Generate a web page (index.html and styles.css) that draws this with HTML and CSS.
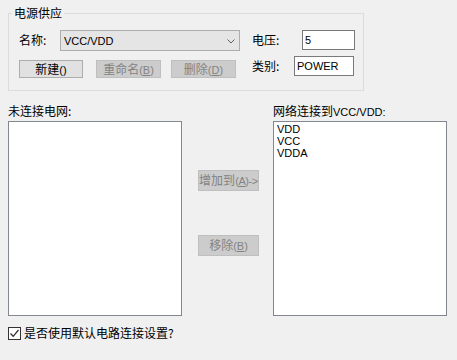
FILE: index.html
```html
<!DOCTYPE html>
<html lang="zh-CN">
<head>
    <meta charset="UTF-8">
    <title>电源供应</title>
    <link rel="stylesheet" href="styles.css">
</head>
<body>
    <div class="group">
        <span class="group-title">电源供应</span>
        <div class="row row-top">
            <span class="lbl lbl-name">名称:</span>
            <div class="combo">
                <span class="latin">VCC/VDD</span>
                <svg class="chev" width="8" height="5" viewBox="0 0 8 5"><path d="M0.5 0.5 L4 4 L7.5 0.5" fill="none" stroke="#606060" stroke-width="1"/></svg>
            </div>
            <span class="lbl lbl-volt">电压:</span>
            <input class="field field-volt latin" type="text" value="5">
        </div>
        <div class="row row-bottom">
            <button class="btn btn-new">新建<span class="latin">()</span></button>
            <button class="btn btn-rename" disabled>重命名<span class="latin">(<u>B</u>)</span></button>
            <button class="btn btn-delete" disabled>删除<span class="latin">(<u>D</u>)</span></button>
            <span class="lbl lbl-type">类别:</span>
            <input class="field field-type latin" type="text" value="POWER">
        </div>
    </div>

    <div class="lists">
        <div class="list-col">
            <div class="list-label">未连接电网:</div>
            <div class="listbox"></div>
        </div>
        <div class="mid-col">
            <button class="btn btn-add" disabled>增加到<span class="latin tight">(<u>A</u>)-&gt;</span></button>
            <button class="btn btn-remove" disabled>移除<span class="latin">(<u>B</u>)</span></button>
        </div>
        <div class="list-col">
            <div class="list-label">网络连接到<span class="latin">VCC/VDD:</span></div>
            <div class="listbox">
                <div class="item latin">VDD</div>
                <div class="item latin">VCC</div>
                <div class="item latin">VDDA</div>
            </div>
        </div>
    </div>

    <label class="check-row">
        <span class="checkbox">
            <svg width="11" height="11" viewBox="0 0 11 11"><path d="M1.5 5.5 L4.2 8.3 L9.5 2" fill="none" stroke="#333" stroke-width="1.3"/></svg>
        </span>
        是否使用默认电路连接设置?
    </label>
</body>
</html>
```

FILE: styles.css
```css
body {
    margin: 0;
    width: 457px;
    height: 360px;
    background: #f0f0f0;
    font-family: "Noto Sans CJK SC", "Liberation Sans", sans-serif;
    font-size: 12px;
    line-height: 14px;
    color: #000;
    overflow: hidden;
}

.latin { font-family: "Liberation Sans", Arial, sans-serif; font-size: 11px; }
.tight { letter-spacing: -0.4px; }

/* group box */
.group {
    margin: 13px 0 0 8px;
    width: 344px;
    height: 76px;
    border: 1px solid #dcdcdc;
    padding: 0 0 0 10px;
    box-sizing: content-box;
}
.group-title {
    display: inline-block;
    margin: -8px 0 0 -7px;
    padding: 0 2px;
    background: #f0f0f0;
    vertical-align: top;
    height: 14px;
}
.row { display: flex; align-items: flex-start; }
.row-top { margin-top: 2px; }
.row-bottom { margin-top: 5px; }

.lbl { display: inline-block; line-height: 20px; }
.lbl-name { width: 41px; }
.lbl-volt { width: 50px; margin-left: 12px; }
.lbl-type { width: 42px; margin-left: 16px; }

.combo {
    width: 180px;
    height: 21px;
    box-sizing: border-box;
    border: 1px solid #adadad;
    background: #e5e5e5;
    display: flex;
    align-items: center;
    justify-content: space-between;
    padding: 0 4px 0 3px;
}
.chev { margin-top: 1px; }

.field {
    height: 20px;
    box-sizing: border-box;
    border: 1px solid #7a7a7a;
    background: #fff;
    padding: 0 2px;
    margin: 0;
    outline: none;
    color: #000;
}
.field-volt { width: 53px; }
.field-type { width: 60px; }

.btn {
    box-sizing: border-box;
    height: 18px;
    margin: 4px 0 0;
    padding: 0;
    border: 1px solid #adadad;
    background: #e1e1e1;
    font-family: "Noto Sans CJK SC", "Liberation Sans", sans-serif;
    font-size: 12px;
    line-height: 14px;
    color: #000;
    white-space: nowrap;
    overflow: visible;
}
.btn:disabled {
    border-color: #bfbfbf;
    background: #cccccc;
    color: #838383;
}
.btn u { text-decoration: underline; }
.btn-new { width: 64px; }
.btn-rename { width: 65px; margin-left: 13px; }
.btn-delete { width: 65px; margin-left: 10px; }

/* lists */
.lists {
    display: flex;
    margin: 12px 0 0 8px;
}
.list-col { width: 174px; }
.list-label { height: 16px; line-height: 16px; margin-bottom: 2px; }
.listbox {
    height: 195px;
    box-sizing: border-box;
    border: 1px solid #828790;
    background: #fff;
    padding: 1px 3px;
}
.item { line-height: 12px; }

.mid-col {
    width: 61px;
    margin: 0 14px 0 16px;
    display: flex;
    flex-direction: column;
    padding-top: 67px;
}
.btn-add, .btn-remove { width: 61px; height: 21px; margin: 0; }
.btn-remove { margin-top: 44px; }

.check-row {
    display: flex;
    align-items: center;
    margin: 10px 0 0 8px;
    height: 14px;
}
.checkbox {
    width: 13px;
    height: 13px;
    box-sizing: border-box;
    border: 1px solid #333;
    background: #fff;
    display: flex;
    align-items: center;
    justify-content: center;
    margin-right: 3px;
}
```
